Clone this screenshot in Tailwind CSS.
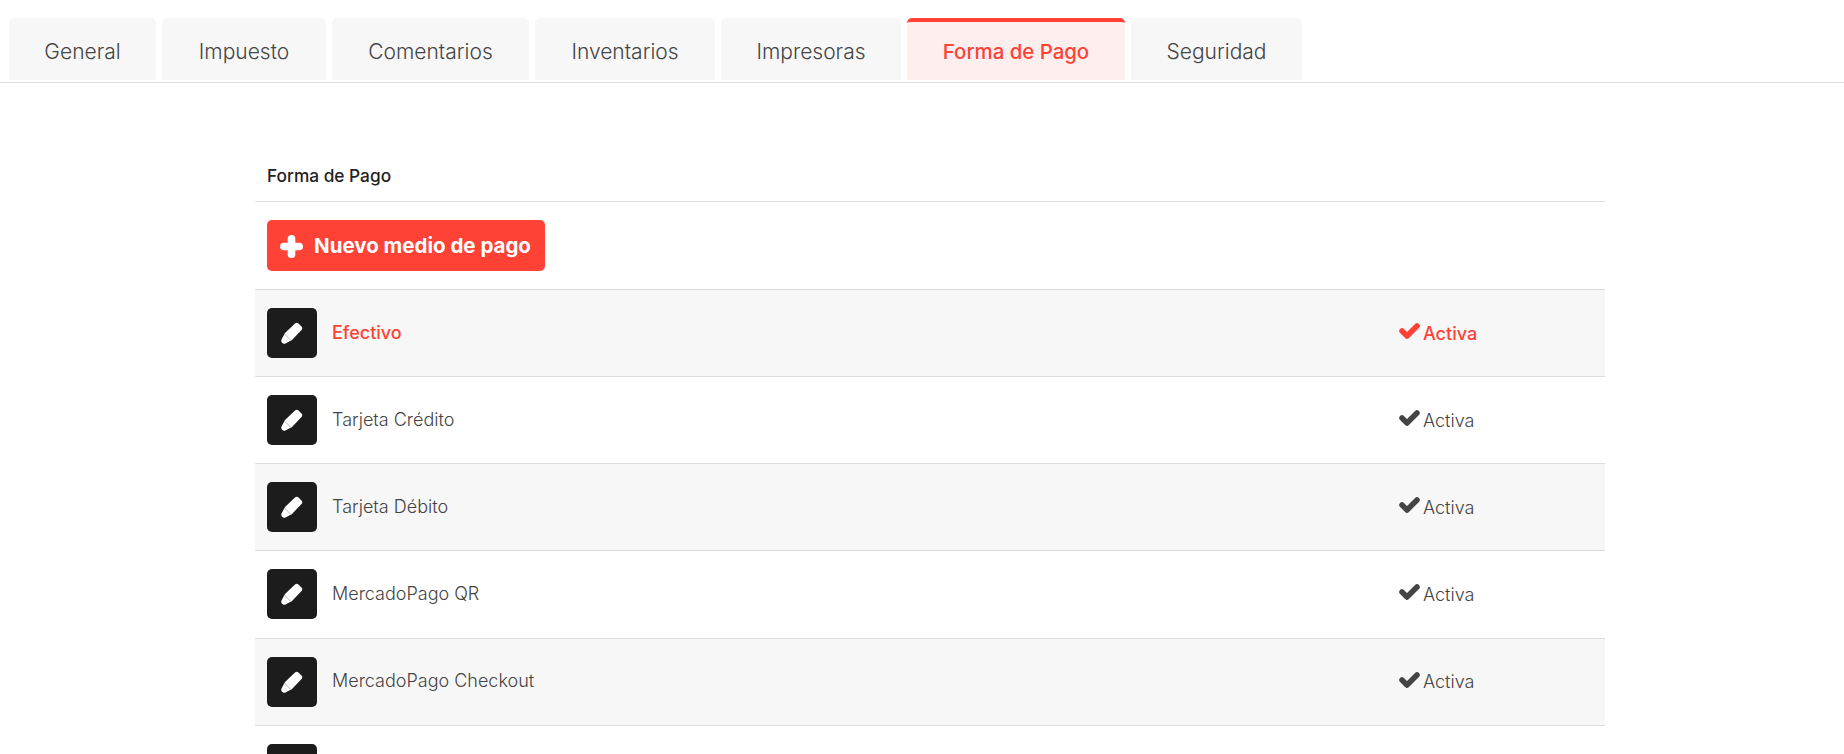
<!DOCTYPE html>
<html lang="es">
<head>
    <meta charset="UTF-8">
    <title>Forma de Pago</title>
    <script src="https://cdn.jsdelivr.net/npm/@tailwindcss/browser@4"></script>
</head>
<body class="bg-white h-[754px] overflow-hidden font-['Inter',sans-serif] text-[#444]">

    <!-- tabs -->
    <nav class="flex gap-[6px] pt-[18px] pl-[9px] h-[83px] border-b border-[#ddd] text-[21px] font-light">
        <a class="w-[147px] h-[62px] pt-[6px] flex items-center justify-center bg-[#f7f7f7] rounded-t-[5px]">General</a>
        <a class="w-[164px] h-[62px] pt-[6px] flex items-center justify-center bg-[#f7f7f7] rounded-t-[5px]">Impuesto</a>
        <a class="w-[197px] h-[62px] pt-[6px] flex items-center justify-center bg-[#f7f7f7] rounded-t-[5px]">Comentarios</a>
        <a class="w-[180px] h-[62px] pt-[6px] flex items-center justify-center bg-[#f7f7f7] rounded-t-[5px]">Inventarios</a>
        <a class="w-[180px] h-[62px] pt-[6px] flex items-center justify-center bg-[#f7f7f7] rounded-t-[5px]">Impresoras</a>
        <a class="w-[218px] h-[62px] pt-[2px] flex items-center justify-center bg-[#ffeeee] rounded-t-[5px] border-t-4 border-[#ff4136] text-[#ff4136] text-[20.4px] font-medium">Forma de Pago</a>
        <a class="w-[171px] h-[62px] pt-[6px] flex items-center justify-center bg-[#f7f7f7] rounded-t-[5px]">Seguridad</a>
    </nav>

    <main class="ml-[255px] w-[1350px]">
        <div class="h-[119px] pt-[79px] pl-3 border-b border-[#ddd] text-[17.3px] leading-[28px] font-medium text-[#222]">Forma de Pago</div>

        <div class="h-[88px] pt-[18px] pl-3 border-b border-[#ddd]">
            <button class="w-[278px] h-[51px] flex items-center gap-[11px] pl-[13px] pt-[2px] bg-[#ff4136] rounded-[5px] text-white text-[20.5px] font-bold">
                <svg viewBox="0 0 24 24" class="w-[23px] h-[23px] fill-white"><path d="M8 4a4 4 0 0 1 8 0v4h4a4 4 0 0 1 0 8h-4v4a4 4 0 0 1-8 0v-4H4a4 4 0 0 1 0-8h4z"/></svg>
                Nuevo medio de pago
            </button>
        </div>

        <div class="flex items-center h-[87.15px] pl-3 border-b border-[#ddd] bg-[#f7f7f7] text-[#ff4136] font-medium">
            <span class="w-[50px] h-[50px] flex items-center justify-center bg-[#1c1c1c] rounded-[5px]"><svg viewBox="0 0 24 24" class="w-6 h-6"><path d="M15 2.500c1-1 2.500-1 3.500 0l3 3c1 1 1 2.500 0 3.500L12 19l-6.500 3.500C3 23.500.5 21 1.500 18.500L5 12z" fill="#fff"/><path d="M4.500 13l6.500 6.500" stroke="#bbb" stroke-width="1"/></svg></span>
            <span class="ml-[15px] w-[1067px] text-[18px] -mt-[2px]">Efectivo</span>
            <span class="flex items-center gap-[3px] text-[18px]"><svg viewBox="0 0 21 16" class="w-[21px] h-[16px] -mt-[4px] stroke-[#ff4136]" fill="none" stroke-width="5.500" stroke-linecap="round" stroke-linejoin="round"><path d="M3 8l5 5L18 3"/></svg><span>Activa</span></span>
        </div>
        <div class="flex items-center h-[87.15px] pl-3 border-b border-[#ddd] font-light">
            <span class="w-[50px] h-[50px] flex items-center justify-center bg-[#1c1c1c] rounded-[5px]"><svg viewBox="0 0 24 24" class="w-6 h-6"><path d="M15 2.500c1-1 2.500-1 3.500 0l3 3c1 1 1 2.500 0 3.500L12 19l-6.500 3.500C3 23.500.5 21 1.500 18.500L5 12z" fill="#fff"/><path d="M4.500 13l6.500 6.500" stroke="#bbb" stroke-width="1"/></svg></span>
            <span class="ml-[15px] w-[1067px] text-[18px] -mt-[2px]">Tarjeta Crédito</span>
            <span class="flex items-center gap-[3px] text-[18px]"><svg viewBox="0 0 21 16" class="w-[21px] h-[16px] -mt-[4px] stroke-[#444]" fill="none" stroke-width="5.500" stroke-linecap="round" stroke-linejoin="round"><path d="M3 8l5 5L18 3"/></svg><span>Activa</span></span>
        </div>
        <div class="flex items-center h-[87.15px] pl-3 border-b border-[#ddd] bg-[#f7f7f7] font-light">
            <span class="w-[50px] h-[50px] flex items-center justify-center bg-[#1c1c1c] rounded-[5px]"><svg viewBox="0 0 24 24" class="w-6 h-6"><path d="M15 2.500c1-1 2.500-1 3.500 0l3 3c1 1 1 2.500 0 3.500L12 19l-6.500 3.500C3 23.500.5 21 1.500 18.500L5 12z" fill="#fff"/><path d="M4.500 13l6.500 6.500" stroke="#bbb" stroke-width="1"/></svg></span>
            <span class="ml-[15px] w-[1067px] text-[18px] -mt-[2px]">Tarjeta Débito</span>
            <span class="flex items-center gap-[3px] text-[18px]"><svg viewBox="0 0 21 16" class="w-[21px] h-[16px] -mt-[4px] stroke-[#444]" fill="none" stroke-width="5.500" stroke-linecap="round" stroke-linejoin="round"><path d="M3 8l5 5L18 3"/></svg><span>Activa</span></span>
        </div>
        <div class="flex items-center h-[87.15px] pl-3 border-b border-[#ddd] font-light">
            <span class="w-[50px] h-[50px] flex items-center justify-center bg-[#1c1c1c] rounded-[5px]"><svg viewBox="0 0 24 24" class="w-6 h-6"><path d="M15 2.500c1-1 2.500-1 3.500 0l3 3c1 1 1 2.500 0 3.500L12 19l-6.500 3.500C3 23.500.5 21 1.500 18.500L5 12z" fill="#fff"/><path d="M4.500 13l6.500 6.500" stroke="#bbb" stroke-width="1"/></svg></span>
            <span class="ml-[15px] w-[1067px] text-[18px] -mt-[2px]">MercadoPago QR</span>
            <span class="flex items-center gap-[3px] text-[18px]"><svg viewBox="0 0 21 16" class="w-[21px] h-[16px] -mt-[4px] stroke-[#444]" fill="none" stroke-width="5.500" stroke-linecap="round" stroke-linejoin="round"><path d="M3 8l5 5L18 3"/></svg><span>Activa</span></span>
        </div>
        <div class="flex items-center h-[87.15px] pl-3 border-b border-[#ddd] bg-[#f7f7f7] font-light">
            <span class="w-[50px] h-[50px] flex items-center justify-center bg-[#1c1c1c] rounded-[5px]"><svg viewBox="0 0 24 24" class="w-6 h-6"><path d="M15 2.500c1-1 2.500-1 3.500 0l3 3c1 1 1 2.500 0 3.500L12 19l-6.500 3.500C3 23.500.5 21 1.500 18.500L5 12z" fill="#fff"/><path d="M4.500 13l6.500 6.500" stroke="#bbb" stroke-width="1"/></svg></span>
            <span class="ml-[15px] w-[1067px] text-[18px] -mt-[2px]">MercadoPago Checkout</span>
            <span class="flex items-center gap-[3px] text-[18px]"><svg viewBox="0 0 21 16" class="w-[21px] h-[16px] -mt-[4px] stroke-[#444]" fill="none" stroke-width="5.500" stroke-linecap="round" stroke-linejoin="round"><path d="M3 8l5 5L18 3"/></svg><span>Activa</span></span>
        </div>
        <div class="pt-[18px] pl-3">
            <span class="w-[50px] h-[50px] flex items-center justify-center bg-[#1c1c1c] rounded-[5px]"></span>
        </div>
    </main>

</body>
</html>
